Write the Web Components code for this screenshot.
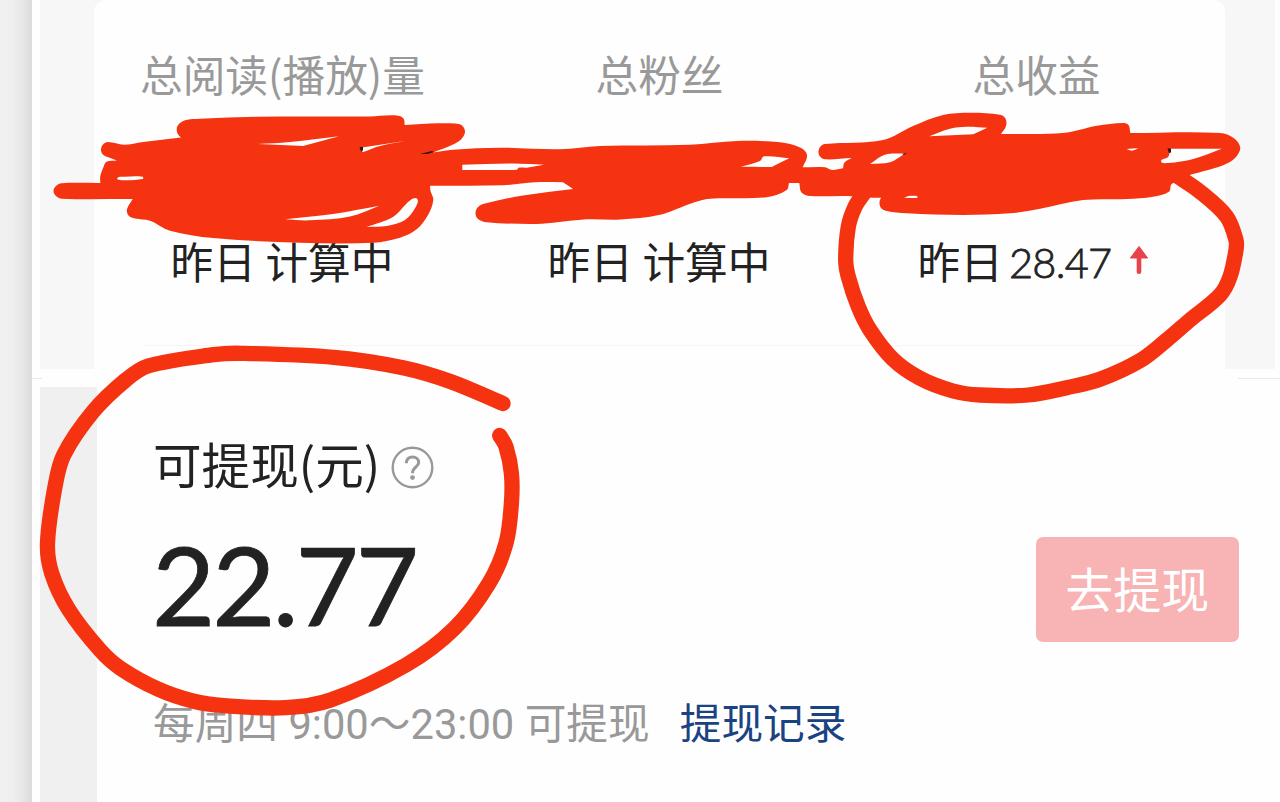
<!DOCTYPE html>
<html lang="zh-CN">
<head>
<meta charset="UTF-8">
<title>收益</title>
<style>
  body {
    margin: 0;
    width: 1280px;
    height: 802px;
    overflow: hidden;
    background: #fefefe;
    font-family: "Noto Sans CJK SC", sans-serif;
    color: #222;
  }
</style>
</head>
<body>
<income-page>
  <stats-panel>
    <stat-cell label="总阅读(播放)量">昨日 计算中</stat-cell>
    <stat-cell label="总粉丝">昨日 计算中</stat-cell>
    <stat-cell label="总收益" amount="28.47">昨日</stat-cell>
  </stats-panel>
  <withdraw-panel amount="22.77">
    <span slot="title">可提现(元)</span>
    <span slot="action">去提现</span>
    <span slot="note">每周四 9:00～23:00 可提现</span>
    <span slot="link">提现记录</span>
  </withdraw-panel>
  <ink-marks slot="overlay"></ink-marks>
</income-page>

<script>
class IncomePage extends HTMLElement {
  constructor() {
    super();
    this.attachShadow({ mode: "open" });
    this.shadowRoot.innerHTML = `
      <style>
        :host {
          display: grid;
          grid-template-columns: 32px 1fr;
          position: relative;
          width: 1280px;
          height: 802px;
        }
        .edge {
          background: linear-gradient(to right, #f0f0f0 0, #efefef 12px, #e8e8e8 22px, #dadada 32px);
        }
        main {
          display: flex;
          flex-direction: column;
          min-width: 0;
        }
      </style>
      <div class="edge"></div>
      <main><slot></slot></main>
      <slot name="overlay"></slot>
    `;
  }
}

class StatsPanel extends HTMLElement {
  constructor() {
    super();
    this.attachShadow({ mode: "open" });
    this.shadowRoot.innerHTML = `
      <style>
        :host {
          display: block;
        }
        .panel {
          box-sizing: border-box;
          width: 1235px;
          height: 369px;
          margin-left: 8px;
          padding: 0 50px 0 54px;
          background: #f7f7f7;
        }
        .card {
          box-sizing: border-box;
          height: 369px;
          padding-top: 45px;
          background: #fefefe;
          border-radius: 12px 12px 0 0;
        }
        .cells {
          display: grid;
          grid-template-columns: repeat(3, 1fr);
          height: 300px;
        }
        hr {
          width: 1030px;
          height: 1px;
          margin: 0 auto;
          border: 0;
          background: #f5f5f5;
        }
        .seam {
          display: flex;
          justify-content: space-between;
          align-items: center;
          height: 18px;
        }
        .seam i {
          width: 10px;
          height: 1px;
          background: #e9e9e9;
        }
        .seam i:last-child {
          width: 42px;
        }
      </style>
      <div class="panel">
        <div class="card">
          <div class="cells"><slot></slot></div>
          <hr>
        </div>
      </div>
      <div class="seam"><i></i><i></i></div>
    `;
  }
}

class StatCell extends HTMLElement {
  constructor() {
    super();
    this.attachShadow({ mode: "open" });
  }

  connectedCallback() {
    const amount = this.getAttribute("amount");
    this.shadowRoot.innerHTML = `
      <style>
        :host {
          display: flex;
          flex-direction: column;
          align-items: center;
          font-size: 42.7px;
          line-height: 56px;
          white-space: nowrap;
        }
        .label {
          color: #999;
        }
        .day {
          display: flex;
          align-items: center;
          height: 56px;
          margin: 131px 1px 0 0;
        }
        .amount {
          font-family: Lato, sans-serif;
          font-size: 41.5px;
          font-weight: 300;
          -webkit-text-stroke: 0.8px #222;
          letter-spacing: -0.7px;
          margin-left: 6px;
          padding-top: 3px;
        }
        svg {
          margin: 0 5px 0 18px;
        }
      </style>
      <div class="label">${this.getAttribute("label")}</div>
      <div class="day">
        <slot></slot>
        ${amount ? `
        <span class="amount">${amount}</span>
        <svg width="20" height="30" viewBox="0 0 20 30">
          <path d="M10 1.4 18.6 13H1.4Z" fill="#e8434a" stroke="#e8434a" stroke-width="1" stroke-linejoin="round"/>
          <path d="M10 11V26.8" stroke="#e8434a" stroke-width="4.6" stroke-linecap="round"/>
        </svg>` : ""}
      </div>
    `;
  }
}

class WithdrawPanel extends HTMLElement {
  constructor() {
    super();
    this.attachShadow({ mode: "open" });
  }

  connectedCallback() {
    this.shadowRoot.innerHTML = `
      <style>
        :host {
          display: block;
          height: 415px;
          margin-left: 8px;
          padding-left: 57px;
          background: #f0f0f0;
        }
        .card {
          box-sizing: border-box;
          height: 415px;
          padding: 44px 41.5px 0 56px;
          background: #fefefe;
          white-space: nowrap;
        }
        .title {
          display: flex;
          align-items: center;
          font-size: 48.6px;
          line-height: 64px;
        }
        .title svg {
          margin: 9px 0 0 11px;
        }
        .row {
          display: flex;
          justify-content: space-between;
          height: 189px;
        }
        .amount {
          margin: 34px 0 0 -1px;
          font: 400 109px/110px Lato, sans-serif;
          letter-spacing: -2.9px;
          -webkit-text-stroke: 0.8px #222;
        }
        button {
          width: 202.5px;
          height: 105px;
          margin-top: 42px;
          padding: 0 0 5px;
          border: 0;
          border-radius: 7px;
          background: #f8b3b5;
          color: #fff;
          font-family: inherit;
          font-size: 48px;
        }
        .foot {
          display: flex;
          gap: 30px;
          align-items: baseline;
          margin-top: 9px;
          font-size: 41.7px;
          line-height: 56px;
        }
        .note {
          font-family: Roboto, "Noto Sans CJK SC", sans-serif;
          color: #999;
        }
        .link {
          color: #1a4382;
        }
      </style>
      <div class="card">
        <div class="title">
          <slot name="title"></slot>
          <svg width="43" height="43" viewBox="0 0 43 43" fill="none" stroke="#999">
            <circle cx="21.5" cy="21.5" r="19.8" stroke-width="2.4"/>
            <path d="M15.3 17.2C15.3 13.3 17.8 11 21.5 11C25.2 11 27.7 13.3 27.7 16.5C27.7 21 21.5 21 21.5 27.2" stroke-width="3"/>
            <circle cx="21.5" cy="31.6" r="2.4" fill="#999" stroke="none"/>
          </svg>
        </div>
        <div class="row">
          <div class="amount">${this.getAttribute("amount")}</div>
          <button><slot name="action"></slot></button>
        </div>
        <div class="foot">
          <span class="note"><slot name="note"></slot></span>
          <span class="link"><slot name="link"></slot></span>
        </div>
      </div>
    `;
  }
}

// Marker strokes: x,y pairs. A repeated point makes a sharp corner.
const RINGS = [
  "503,403.5 451,381.7 403,367.7 334,357.3 241,353.3 213.5,354.7 148,366 125.7,380 93,411.7 63.7,455 55,486.7 47.5,543.3 51.7,573.3 69,610 100,650 120.5,668.3 158.4,689.3 192.8,701 224,705.7 285.8,707.7 330.6,700 406,665 454.5,628.3 489,583.3 506,543.3 511.4,503.3 511.4,473.3 506,446.7 499.7,435.5",
  "1174,174 1200,191.7 1226.7,216.7 1236,240 1236,250 1230,276.7 1220,295 1190,320 1166.7,340 1140,360.7 1100,379.3 1066.7,387.7 1028,395 980,395 953,391 920,378.3 893,359.3 870,330 858.3,306.7 848.3,276.7 845.7,260 848.3,226.7 855,206.7 864,193",
];

const SCRIBBLE = "61.7,198.7 56,196 53.5,191 56,186 61.7,183.3 100.3,183 100.3,183 100.3,176 103.5,167 106.5,161.8 117,160.5 117,160.5 107.5,157 102.8,154.5 101,149.5 103,144.5 108,142 124,144.7 143,142 181,137.5 181,137.5 177.3,133 177.5,126 185,120.3 200,118.7 260,116.8 370,116.5 380,115.7 398,115.7 403.5,118.5 404.7,125 404.7,125 430,123.5 455,123.5 462,125.5 465,132 461,139.5 453,144.5 433,152.5 433,152.5 453,149.7 500,147.7 560,149.3 600,146 690,144.7 737,141 780,142.3 800,147.5 807,155 802.7,167.3 802.7,167.3 825,167.3 832,170 843,168.3 843,168.3 844.5,162.5 851.7,158 851.7,158 825,159.3 820,156.5 818.5,151.5 820.5,146.5 825,144 883,140 913,126 943,115 970,112.7 1000,114.7 1005.5,118.5 1006,126 1001,134 1001,134 1063,133 1097,125.7 1123,123 1128.5,125 1130.3,133 1130.3,133 1220,133 1235,139 1240,150 1228,163 1188,175.5 1188,175.5 1171.7,184 1169,191.7 1153,196.7 1126.7,199 1083,200 1040,208.7 1010,213.3 963,215 906.7,213.3 886.7,211 881,208 879.5,202 881,197.7 881,197.7 868,197.5 846.7,196 810,196 801.5,192.5 799.3,183 799.3,183 789,183 789,183 786.7,190 766.7,197.3 710,198.7 693,202.7 660,214.7 620,219.5 586.7,219.3 553,222.7 530,224 486.7,222.3 478,219 475.5,213.3 478,207 485,203.5 523,195.5 573,189 573,189 563,182.3 563,182.3 535,182.3 503,185.3 430,185.7 430,185.7 430.5,191 433.3,200 428,215 417,229 400,237.7 373,242.7 300,242.7 213,238 170,230.7 150,220.7 135,218.5 128.5,215.5 127,209.3 132.7,199 132.7,199";

const GAPS = [
  "258,144 258,144 290,142 339,136.3 339,136.3 304,145.8 304,146",
  "362,147.5 362,147.5 405,141 405,141 380,146 362.5,152.3 362.5,152.3",
  "117.3,178.3 125,176.7 142.7,176.7 142.7,179 123.3,180.3",
  "285,219.3 285,219.3 333,214 379.3,205.7 379.3,205.7 350,216.5 310,220.3",
  "366.7,227 366.7,227 393.3,216.7 410,200.5 417.3,199 415,208.3 405,220 386.7,226",
  "462.3,164.7 462.3,164.7 513,163.5 544,164.7 544,164.7 526.7,167.7 518.7,167.7 516.7,169.7 462.3,170 462.3,170",
  "740.7,166.7 740.7,166.7 760,161 764,156.3 789.3,158.3 789.3,158.3 771.7,167 771.7,167",
  "929.3,136.3 929.3,136.3 950,128.7 966.7,126.7 987.3,127.7 987.3,127.7 973.3,134.3 973.3,134.3",
  "870,164 870,164 885,154.7 905,153.5 905,153.5 890,162.3",
  "904,197.7 904,197.7 909,196 917.3,196 917.3,196 917.3,198 917.3,198",
  "1126.7,149 1126.7,149 1138.3,148.3 1138.3,148.3 1132,150.7",
  "1170,148.7 1170,148.7 1221.7,148.7 1221.7,148.7 1193.3,159 1168.3,163 1161,161.3 1168.3,156.7",
];

class InkMarks extends HTMLElement {
  constructor() {
    super();
    this.attachShadow({ mode: "open" });
  }

  connectedCallback() {
    const gaps = GAPS.map((g) => `<path d="${this.curve(g, true)}" fill="#fefefe"/>`).join("");
    const rings = RINGS.map((r) => `<path class="ring" d="${this.curve(r, false)}"/>`).join("");
    this.shadowRoot.innerHTML = `
      <style>
        :host {
          display: block;
          position: absolute;
          inset: 0;
          pointer-events: none;
        }
        svg {
          display: block;
        }
        .ring {
          fill: none;
          stroke: #f53311;
          stroke-width: 15.3;
          stroke-linecap: round;
          stroke-linejoin: round;
        }
      </style>
      <svg width="1280" height="802" viewBox="0 0 1280 802">
        <path d="${this.curve(SCRIBBLE, true)}" fill="#f53311"/>
        ${gaps}
        <path d="M359.5 147H363V150L361 151.5ZM420 154 432 151 434 152 427 154ZM902 154 907 152.7 904 155ZM1167.5 148.5H1171V152.5L1169 153Z" fill="#2b1512"/>
        ${rings}
      </svg>
    `;
  }

  // Smooth curve through the points, handles kept to a third of each segment
  curve(list, closed) {
    const pts = list.split(" ").map((p) => p.split(",").map(Number));
    const n = pts.length;
    const at = (i) => closed ? pts[(i + n) % n] : pts[Math.max(0, Math.min(n - 1, i))];
    const dir = (i) => {
      const a = at(i - 1);
      const b = at(i + 1);
      const len = Math.hypot(b[0] - a[0], b[1] - a[1]) || 1;
      return [(b[0] - a[0]) / len, (b[1] - a[1]) / len];
    };
    let d = `M${pts[0]}`;
    for (let i = 0; i < (closed ? n : n - 1); i++) {
      const p = at(i);
      const q = at(i + 1);
      const h = Math.hypot(q[0] - p[0], q[1] - p[1]) / 3;
      const u = dir(i);
      const v = dir(i + 1);
      d += `C${p[0] + u[0] * h} ${p[1] + u[1] * h} ${q[0] - v[0] * h} ${q[1] - v[1] * h} ${q[0]} ${q[1]}`;
    }
    return closed ? d + "Z" : d;
  }
}

customElements.define("income-page", IncomePage);
customElements.define("stats-panel", StatsPanel);
customElements.define("stat-cell", StatCell);
customElements.define("withdraw-panel", WithdrawPanel);
customElements.define("ink-marks", InkMarks);
</script>
</body>
</html>
